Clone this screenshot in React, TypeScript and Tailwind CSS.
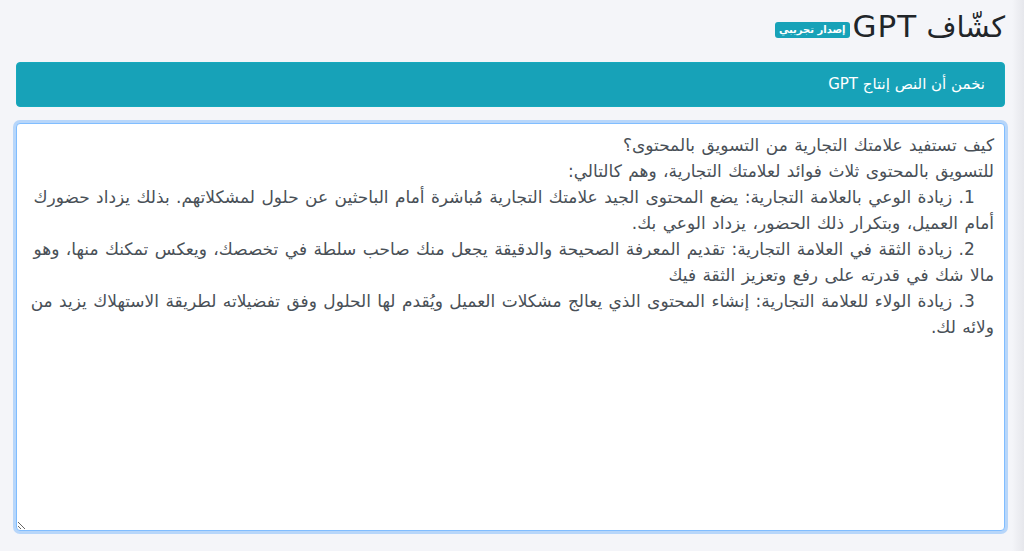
const TEXT = `كيف تستفيد علامتك التجارية من التسويق بالمحتوى؟
للتسويق بالمحتوى ثلاث فوائد لعلامتك التجارية، وهم كالتالي:
   1. زيادة الوعي بالعلامة التجارية: يضع المحتوى الجيد علامتك التجارية مُباشرة أمام الباحثين عن حلول لمشكلاتهم. بذلك يزداد حضورك أمام العميل، وبتكرار ذلك الحضور، يزداد الوعي بك.
   2. زيادة الثقة في العلامة التجارية: تقديم المعرفة الصحيحة والدقيقة يجعل منك صاحب سلطة في تخصصك، ويعكس تمكنك منها، وهو مالا شك في قدرته على رفع وتعزيز الثقة فيك
   3. زيادة الولاء للعلامة التجارية: إنشاء المحتوى الذي يعالج مشكلات العميل ويُقدم لها الحلول وفق تفضيلاته لطريقة الاستهلاك يزيد من ولائه لك.`;

export default function App() {
  return (
    <div
      dir="rtl"
      className="flex h-[551px] w-full bg-[#f4f5f9] font-['DejaVu_Sans',sans-serif]"
    >
      <div className="flex w-[12px] bg-gradient-to-l from-[#e6e7ec] to-[#f4f5f9]" />
      <div className="flex flex-1 flex-col pr-[7px] pl-[16px]">
        <div className="flex items-end gap-[3px] pt-[6px] pb-[15px]">
          <h3 className="text-[29px] leading-[40px] text-[#212529]">
            كشّاف <span className="text-[31px] tracking-[1px]">GPT</span>
          </h3>
          <span className="mb-[9px] rounded-[3px] bg-[#17a2b8] px-[4px] py-[2px] text-[10px] font-bold leading-[12px] text-white">
            إصدار تجريبي
          </span>
        </div>
        <div className="mb-[16px] flex h-[45px] items-center rounded-[4px] border border-[#16a9bd] bg-[#17a2b8] px-[19px] text-[15px] text-white">
          نخمن أن النص إنتاج GPT
        </div>
        <textarea
          dir="rtl"
          defaultValue={TEXT}
          className="h-[408px] w-full resize rounded-[4px] border border-[#80bdff] bg-white px-[10px] py-[8px] text-[17px] leading-[26px] text-[#495057] [word-spacing:1px] shadow-[0_0_0_3px_rgba(0,123,255,0.25)] outline-none"
        />
      </div>
    </div>
  );
}
